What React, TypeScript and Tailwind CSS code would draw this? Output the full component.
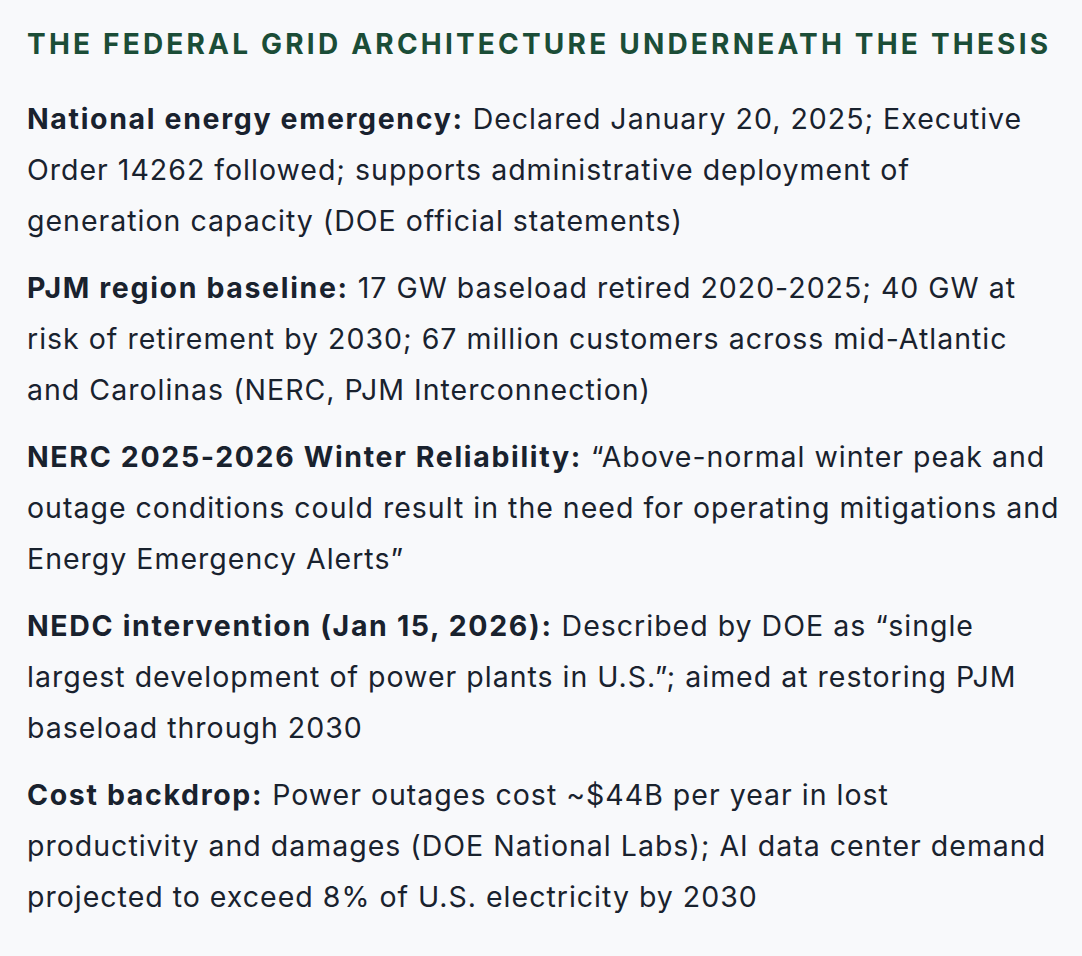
import React from "react";

const items: { label: string; text: string }[] = [
  {
    label: "National energy emergency:",
    text: "Declared January 20, 2025; Executive Order 14262 followed; supports administrative deployment of generation capacity (DOE official statements)",
  },
  {
    label: "PJM region baseline:",
    text: "17 GW baseload retired 2020-2025; 40 GW at risk of retirement by 2030; 67 million customers across mid-Atlantic and Carolinas (NERC, PJM Interconnection)",
  },
  {
    label: "NERC 2025-2026 Winter Reliability:",
    text: "\u201CAbove-normal winter peak and outage conditions could result in the need for operating mitigations and Energy Emergency Alerts\u201D",
  },
  {
    label: "NEDC intervention (Jan 15, 2026):",
    text: "Described by DOE as \u201Csingle largest development of power plants in U.S.\u201D; aimed at restoring PJM baseload through 2030",
  },
  {
    label: "Cost backdrop:",
    text: "Power outages cost ~$44B per year in lost productivity and damages (DOE National Labs); AI data center demand projected to exceed 8% of U.S. electricity by 2030",
  },
];

export default function App() {
  return (
    <div className="min-h-[956px] w-[1082px] bg-[#f8f9fb] pl-[27px] pr-[20px] pt-[24px] font-['Inter',sans-serif] text-[#19222e]">
      <h2 className="mb-[29px] whitespace-nowrap text-[28px] font-bold uppercase leading-[40px] tracking-[3.2px] text-[#1b4d37]">
        The Federal Grid Architecture Underneath the Thesis
      </h2>
      <div className="flex flex-col gap-4">
        {items.map((it) => (
          <p key={it.label} className="text-[28.5px] leading-[51px] tracking-[1px]">
            <strong className="font-bold tracking-[1.65px]">{it.label}</strong> {it.text}
          </p>
        ))}
      </div>
    </div>
  );
}
